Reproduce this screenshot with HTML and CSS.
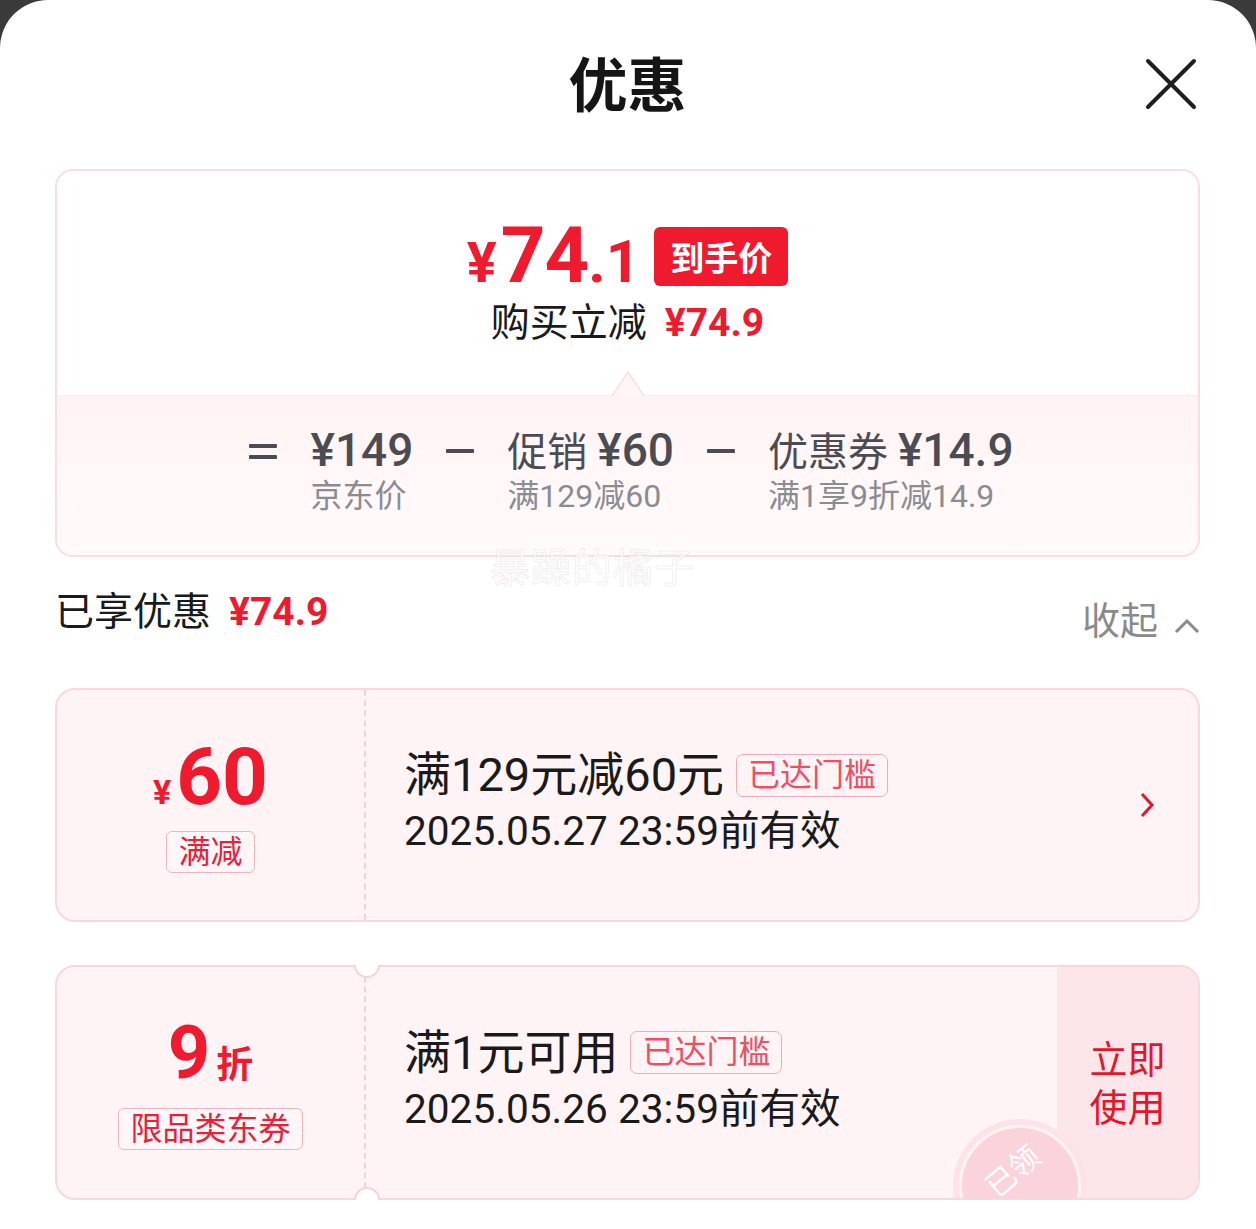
FILE: index.html
```html
<!DOCTYPE html>
<html lang="zh-CN">
<head>
<meta charset="utf-8">
<title>优惠</title>
<link rel="stylesheet" href="styles.css">
</head>
<body>
<div class="sheet">
  <header class="header">
    <h1 class="title">优惠</h1>
    <button class="close" aria-label="关闭">
      <svg width="52" height="52" viewBox="0 0 52 52"><path d="M3 3 L49 49 M49 3 L3 49" stroke="#1f1f1f" stroke-width="4" stroke-linecap="round" fill="none"/></svg>
    </button>
  </header>

  <section class="price-card">
    <div class="price-top">
      <div class="price-row">
        <span class="price"><span class="yen">¥</span><span class="int">74</span><span class="dec">.1</span></span>
        <span class="badge">到手价</span>
      </div>
      <div class="save-line">购买立减<span class="save-amt">¥74.9</span></div>
    </div>
    <div class="price-bottom">
      <svg class="pointer" width="34" height="25" viewBox="0 0 34 25"><path d="M1 25 L17 1 L33 25" fill="#fff4f6" stroke="#fbdfe5" stroke-width="1.5"/></svg>
      <div class="formula">
        <span class="op"><i></i><i></i></span>
        <div class="term"><div class="main"><span class="num">¥149</span></div><div class="sub">京东价</div></div>
        <span class="op"><i></i></span>
        <div class="term"><div class="main">促销 <span class="num">¥60</span></div><div class="sub">满129减60</div></div>
        <span class="op"><i></i></span>
        <div class="term"><div class="main">优惠券 <span class="num">¥14.9</span></div><div class="sub">满1享9折减14.9</div></div>
      </div>
    </div>
  </section>
  <div class="watermark">暴躁的橘子</div>

  <div class="saved-row">
    <div class="saved-left">已享优惠<span class="saved-amt">¥74.9</span></div>
    <div class="collapse">收起<svg width="26" height="16" viewBox="0 0 26 16"><path d="M2 14 L13 3 L24 14" stroke="#8a8a8a" stroke-width="3" fill="none"/></svg></div>
  </div>

  <div class="coupon">
    <div class="coupon-left">
      <div class="amount"><span class="cur">¥</span><span class="big">60</span></div>
      <span class="tag">满减</span>
    </div>
    <div class="coupon-mid">
      <div class="cp-title">满129元减60元<span class="cp-tag">已达门槛</span></div>
      <div class="cp-date">2025.05.27 23:59前有效</div>
    </div>
    <div class="coupon-arrow">
      <svg width="16" height="26" viewBox="0 0 16 26"><path d="M3 2 L13 13 L3 24" stroke="#e0192d" stroke-width="3" fill="none"/></svg>
    </div>
  </div>

  <div class="coupon coupon-2">
    <svg class="notch notch-top" width="26" height="15" viewBox="0 0 26 15"><path d="M1 0 A12 12 0 0 0 25 0 Z" fill="#fff"/><path d="M1 0 A12 12 0 0 0 25 0" fill="none" stroke="#f6d3da" stroke-width="2"/></svg>
    <svg class="notch notch-bottom" width="26" height="15" viewBox="0 0 26 15"><path d="M1 15 A12 12 0 0 1 25 15 Z" fill="#fff"/><path d="M1 15 A12 12 0 0 1 25 15" fill="none" stroke="#f6d3da" stroke-width="2"/></svg>
    <div class="coupon-left">
      <div class="amount discount"><span class="big">9</span><span class="zhe">折</span></div>
      <span class="tag">限品类东券</span>
    </div>
    <div class="coupon-mid">
      <div class="cp-title">满1元可用<span class="cp-tag">已达门槛</span></div>
      <div class="cp-date">2025.05.26 23:59前有效</div>
    </div>
    <div class="coupon-action"><span class="act-line">立即</span><span class="act-line">使用</span></div>
    <div class="stamp-clip">
      <div class="stamp"><div class="stamp-inner"><span>已领</span></div></div>
    </div>
  </div>
</div>
</body>
</html>
```

FILE: styles.css
```css
html, body {
  margin: 0;
  padding: 0;
}
body {
  background: #3a3a3a;
  font-family: Roboto, "Noto Sans CJK SC", sans-serif;
}
.sheet {
  position: relative;
  width: 1256px;
  height: 1229px;
  box-sizing: border-box;
  padding: 0 56px 0 55px;
  background: #fff;
  border-radius: 48px 48px 0 0;
  overflow: hidden;
}

/* header */
.header {
  height: 169px;
  display: grid;
  grid-template-columns: 1fr auto 1fr;
  align-items: center;
  padding-bottom: 6px;
  box-sizing: border-box;
}
.title {
  grid-column: 2;
  margin: 0;
  font-family: "Noto Sans CJK SC", sans-serif;
  font-size: 59px;
  font-weight: 700;
  line-height: 1;
  color: #151515;
}
.close {
  grid-column: 3;
  justify-self: end;
  margin-right: 3px;
  margin-top: 4px;
  width: 52px;
  height: 52px;
  padding: 0;
  border: 0;
  background: none;
  display: block;
}
.close svg { display: block; }

/* price card */
.price-card {
  height: 388px;
  box-sizing: border-box;
  border: 2px solid #f9dde3;
  border-radius: 18px;
  display: flex;
  flex-direction: column;
  overflow: hidden;
}
.price-top {
  height: 224px;
  box-sizing: border-box;
  padding-top: 50px;
  display: flex;
  flex-direction: column;
  align-items: center;
  background: #fff;
}
.price-row {
  height: 70px;
  display: flex;
  align-items: center;
}
.price {
  color: #f01a2e;
  font-weight: 700;
  line-height: 1;
  font-family: Roboto, sans-serif;
}
.price .yen { font-size: 56px; margin-right: 4px; }
.price .int { font-size: 78px; letter-spacing: -1px; }
.price .dec { font-size: 60px; }
.badge {
  margin-left: 14px;
  height: 59px;
  line-height: 59px;
  padding: 0 16px;
  border-radius: 6px;
  background: #f01a2e;
  color: #fff;
  font-size: 34px;
  font-weight: 700;
  font-family: "Noto Sans CJK SC", sans-serif;
}
.save-line {
  margin-top: 10px;
  font-size: 39px;
  line-height: 44px;
  color: #1a1a1a;
}
.save-amt {
  margin-left: 18px;
  color: #f01a2e;
  font-weight: 700;
}
.price-bottom {
  position: relative;
  flex: 1;
  display: flex;
  justify-content: center;
  padding-top: 30px;
  border-top: 1px solid #fcebee;
  background: linear-gradient(#fff3f5, #fffbfb);
}
.pointer {
  position: absolute;
  top: -25px;
  left: 50%;
  margin-left: -17px;
}
.formula {
  display: flex;
  align-items: flex-start;
  gap: 33px;
  margin-left: 8px;
}
.op {
  width: 28px;
  height: 50px;
  display: flex;
  flex-direction: column;
  justify-content: center;
  gap: 7px;
}
.op i {
  display: block;
  height: 4px;
  background: #4b4c52;
  border-radius: 1px;
}
.term .main {
  font-size: 40px;
  line-height: 48px;
  color: #4b4c52;
  white-space: nowrap;
}
.term .main .num {
  font-size: 46px;
  font-weight: 500;
}
.term .sub {
  font-size: 32px;
  line-height: 38px;
  color: #8b8c92;
  white-space: nowrap;
}

.watermark {
  position: absolute;
  left: 490px;
  top: 540px;
  font-family: "Noto Sans CJK SC", sans-serif;
  font-size: 40px;
  line-height: 50px;
  letter-spacing: 1px;
  color: rgba(255, 255, 255, 0.7);
  -webkit-text-stroke: 1px rgba(200, 190, 195, 0.25);
}

/* saved row */
.saved-row {
  margin-top: 30px;
  height: 101px;
  display: flex;
  justify-content: space-between;
  align-items: flex-start;
}
.saved-left {
  padding-left: 0;
  font-size: 39px;
  line-height: 50px;
  color: #1a1a1a;
}
.saved-amt {
  margin-left: 18px;
  color: #f01a2e;
  font-weight: 700;
}
.collapse {
  margin-top: 9px;
  display: flex;
  align-items: center;
  gap: 16px;
  font-size: 38px;
  line-height: 50px;
  color: #8a8a8a;
}
.collapse svg { margin-top: 10px; }

/* coupons */
.coupon {
  position: relative;
  height: 234px;
  box-sizing: border-box;
  border: 2px solid #f8d8de;
  border-radius: 20px;
  background: #fef3f5;
  display: grid;
  grid-template-columns: 309px 1fr auto;
}
.coupon-2 {
  margin-top: 43px;
  height: 235px;
}
.coupon-left {
  display: flex;
  flex-direction: column;
  align-items: center;
  justify-content: center;
  border-right: 2px dashed #f2d2d8;
}
.amount {
  display: flex;
  align-items: baseline;
  color: #f01a2e;
  font-weight: 700;
  line-height: 1;
  margin-top: 0;
}
.amount .cur { font-size: 34px; margin-right: 5px; }
.amount .big { font-size: 80px; }
.amount.discount .big { font-size: 74px; }
.amount.discount .zhe {
  font-family: "Noto Sans CJK SC", sans-serif;
  font-size: 37px;
  margin-left: 6px;
}
.tag {
  margin-top: 14px;
  padding: 0 11px;
  border: 1px solid #efb5bd;
  border-radius: 6px;
  background: #fff6f7;
  color: #e6223a;
  font-size: 32px;
  line-height: 40px;
}
.coupon-2 .tag { margin-top: 18px; }
.coupon-mid {
  padding-left: 38px;
  display: flex;
  flex-direction: column;
  justify-content: center;
  padding-bottom: 4px;
}
.cp-title {
  display: flex;
  align-items: center;
  font-size: 47px;
  line-height: 56px;
  color: #1a1a1a;
  white-space: nowrap;
}
.cp-tag {
  margin-left: 12px;
  padding: 0 11px;
  border: 1px solid #f0acb6;
  border-radius: 7px;
  color: #ec5062;
  font-size: 32px;
  line-height: 41px;
}
.cp-date {
  font-size: 40.6px;
  line-height: 56px;
  color: #1a1a1a;
  white-space: nowrap;
}
.coupon-arrow {
  display: flex;
  align-items: center;
  padding-right: 43px;
}
.coupon-action {
  position: relative;
  z-index: 0;
  width: 141px;
  display: flex;
  flex-direction: column;
  align-items: center;
  justify-content: center;
  text-align: center;
  background: #fde6ea;
  border-radius: 0 18px 18px 0;
  color: #e3162b;
  font-family: Roboto, "Noto Sans CJK SC", sans-serif;
  font-size: 38px;
  padding-top: 2px;
  box-sizing: border-box;
}
.act-line {
  display: block;
  line-height: 48px;
}
.notch {
  position: absolute;
  left: 297px;
  z-index: 2;
  display: block;
}
.notch-top { top: -2px; }
.notch-bottom { bottom: -2px; }

.stamp-clip {
  position: absolute;
  inset: 0;
  overflow: hidden;
  border-radius: 18px;
  pointer-events: none;
  z-index: 1;
}
.stamp {
  position: absolute;
  left: 896px;
  top: 152px;
  width: 134px;
  height: 134px;
  box-sizing: border-box;
  border-radius: 50%;
  background: #fde3e8;
  padding: 6px;
}
.stamp-inner {
  width: 100%;
  height: 100%;
  box-sizing: border-box;
  border-radius: 50%;
  border: 3px solid #fff3f5;
  background: #fbd3da;
  display: flex;
  align-items: center;
  justify-content: center;
}
.stamp-inner span {
  transform: rotate(-40deg) translate(4px, -18px);
  color: #fff;
  font-family: "Noto Sans CJK SC", sans-serif;
  font-size: 30px;
  line-height: 1;
}
```
